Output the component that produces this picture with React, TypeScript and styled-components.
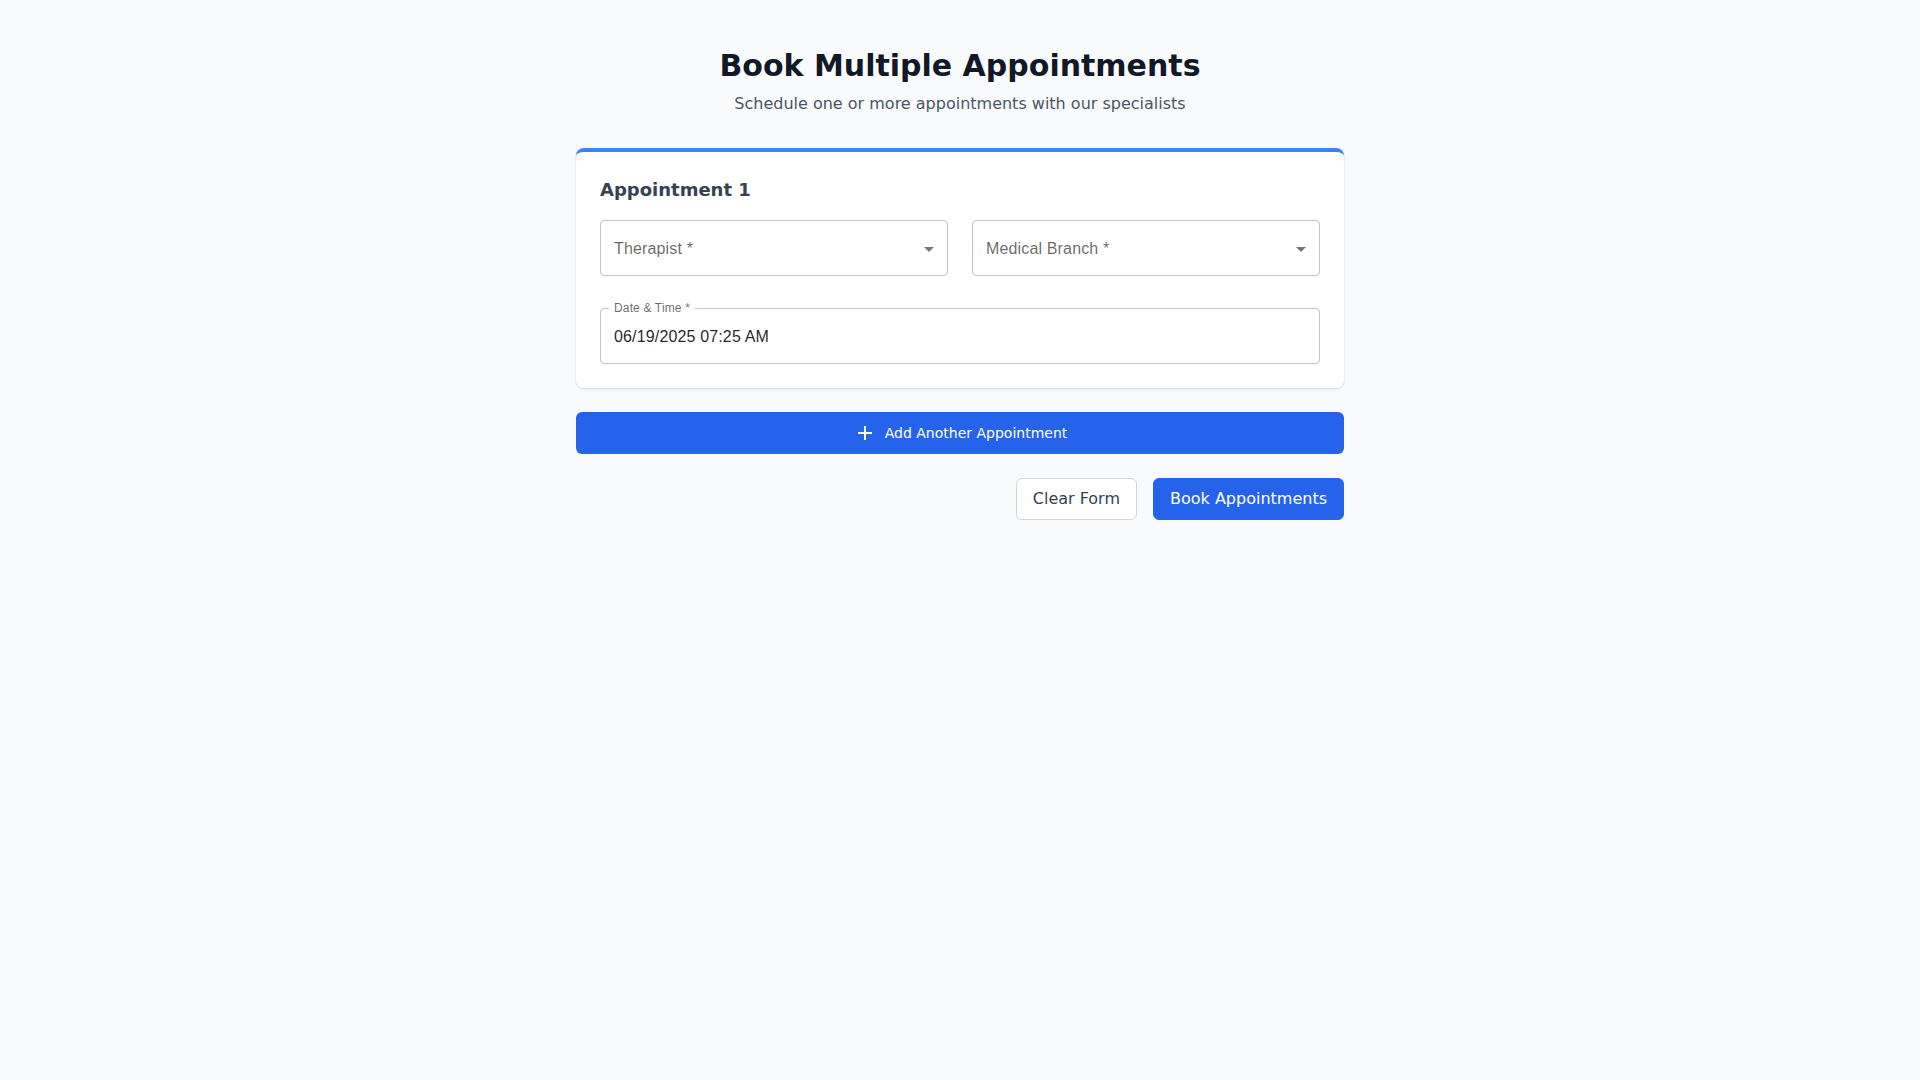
import React from "react";
import styled, { createGlobalStyle } from "styled-components";

const GlobalStyle = createGlobalStyle`
  html, body {
    margin: 0;
    padding: 0;
    background: #f9fafb;
    font-family: "DejaVu Sans", "Liberation Sans", sans-serif;
  }
  * { box-sizing: border-box; }
`;

const Page = styled.main`
  min-height: 100vh;
  background: #f9fafb;
  padding: 48px 16px;
`;

const Container = styled.div`
  max-width: 768px;
  margin: 0 auto;
`;

const Header = styled.header`
  text-align: center;
  margin-bottom: 32px;
`;

const Title = styled.h1`
  margin: 0 0 8px;
  font-size: 30px;
  line-height: 36px;
  font-weight: 700;
  color: #111827;
`;

const Subtitle = styled.p`
  margin: 0;
  font-size: 16px;
  line-height: 24px;
  color: #4b5563;
`;

const Card = styled.section`
  background: #ffffff;
  border-radius: 8px;
  border-top: 4px solid #3b82f6;
  box-shadow: 0 1px 3px rgba(0, 0, 0, 0.1), 0 1px 2px rgba(0, 0, 0, 0.06);
  padding: 24px;
`;

const CardTitle = styled.h2`
  margin: 0 0 16px;
  font-size: 18px;
  line-height: 28px;
  font-weight: 700;
  color: #374151;
`;

const FieldGrid = styled.div`
  display: grid;
  grid-template-columns: 1fr 1fr;
  gap: 24px;
`;

const Outlined = styled.div<{ $spaced?: boolean }>`
  position: relative;
  height: 56px;
  border: 1px solid #c4c4c4;
  border-radius: 4px;
  display: flex;
  align-items: center;
  justify-content: space-between;
  padding: 1px 6px 0 13px;
  margin-top: ${(p) => (p.$spaced ? "32px" : "0")};
  font-family: "Liberation Sans", Arial, sans-serif;
  font-size: 16px;
  background: #fff;
`;

const Placeholder = styled.span`
  color: rgba(0, 0, 0, 0.6);
  letter-spacing: 0.15px;
`;

const Value = styled.span`
  color: rgba(0, 0, 0, 0.87);
  letter-spacing: 0.15px;
`;

const FloatLabel = styled.label`
  position: absolute;
  left: 8px;
  top: -8px;
  padding: 0 5px;
  background: #fff;
  font-size: 12px;
  line-height: 14px;
  color: rgba(0, 0, 0, 0.6);
  letter-spacing: 0.15px;
`;

const Arrow = styled.svg`
  width: 24px;
  height: 24px;
  fill: rgba(0, 0, 0, 0.54);
  flex-shrink: 0;
`;

const AddButton = styled.button`
  width: 100%;
  height: 42px;
  margin-top: 24px;
  border: none;
  border-radius: 6px;
  background: #2563eb;
  color: #ffffff;
  font-family: "DejaVu Sans", sans-serif;
  font-size: 14px;
  display: flex;
  align-items: center;
  justify-content: center;
  gap: 8px;
  cursor: pointer;
`;

const PlusIcon = styled.svg`
  width: 24px;
  height: 24px;
  fill: #ffffff;
`;

const Actions = styled.div`
  display: flex;
  justify-content: flex-end;
  gap: 16px;
  margin-top: 24px;
`;

const ActionButton = styled.button<{ $primary?: boolean }>`
  height: 42px;
  padding: 0 16px;
  border-radius: 6px;
  border: 1px solid ${(p) => (p.$primary ? "#2563eb" : "#d1d5db")};
  background: ${(p) => (p.$primary ? "#2563eb" : "#ffffff")};
  color: ${(p) => (p.$primary ? "#ffffff" : "#374151")};
  font-family: "DejaVu Sans", sans-serif;
  font-size: 16px;
  line-height: 24px;
  cursor: pointer;
`;

const DropArrow = () => (
  <Arrow viewBox="0 0 24 24">
    <path d="M7 10l5 5 5-5z" />
  </Arrow>
);

export default function App() {
  return (
    <>
      <GlobalStyle />
      <Page>
        <Container>
          <Header>
            <Title>Book Multiple Appointments</Title>
            <Subtitle>Schedule one or more appointments with our specialists</Subtitle>
          </Header>
          <Card>
            <CardTitle>Appointment 1</CardTitle>
            <FieldGrid>
              <Outlined>
                <Placeholder>Therapist *</Placeholder>
                <DropArrow />
              </Outlined>
              <Outlined>
                <Placeholder>Medical Branch *</Placeholder>
                <DropArrow />
              </Outlined>
            </FieldGrid>
            <Outlined $spaced>
              <FloatLabel>Date &amp; Time *</FloatLabel>
              <Value>06/19/2025 07:25 AM</Value>
            </Outlined>
          </Card>
          <AddButton>
            <PlusIcon viewBox="0 0 24 24">
              <path d="M19 13h-6v6h-2v-6H5v-2h6V5h2v6h6v2z" />
            </PlusIcon>
            Add Another Appointment
          </AddButton>
          <Actions>
            <ActionButton>Clear Form</ActionButton>
            <ActionButton $primary>Book Appointments</ActionButton>
          </Actions>
        </Container>
      </Page>
    </>
  );
}
